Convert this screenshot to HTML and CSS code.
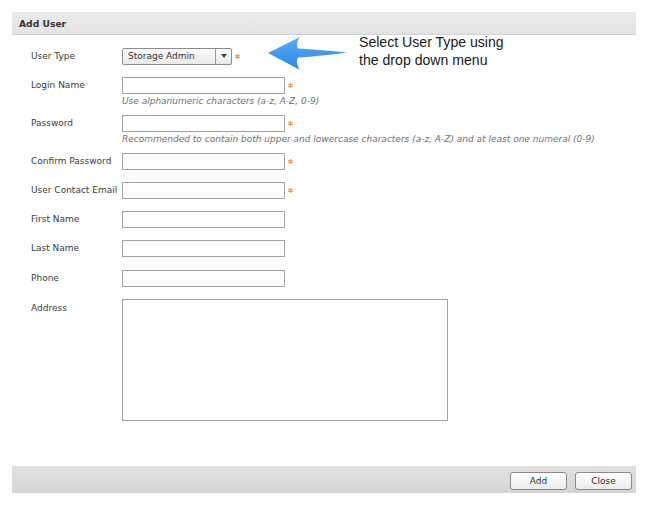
FILE: index.html
```html
<!DOCTYPE html>
<html>
<head>
<meta charset="utf-8">
<link rel="stylesheet" href="styles.css">
</head>
<body>
<div class="dialog">
  <div class="header">Add User</div>
  <div class="body">
    <div class="row">
      <div class="label">User Type</div>
      <div class="field">
        <div class="control-line">
          <div class="select"><span class="select-text">Storage Admin</span><span class="select-btn"><svg width="6" height="4" viewBox="0 0 6 4"><path d="M0 0H6L3 4Z" fill="#444"/></svg></span></div>
          <span class="req"><svg width="7" height="7" viewBox="0 0 7 7"><path d="M3.5 1V6M1.3 2.2L5.7 4.8M1.3 4.8L5.7 2.2" stroke="#f39a4a" stroke-width="1.2"/></svg></span>
        </div>
      </div>
    </div>
    <div class="row has-hint">
      <div class="label">Login Name</div>
      <div class="field">
        <div class="control-line"><div class="input"></div><span class="req"><svg width="7" height="7" viewBox="0 0 7 7"><path d="M3.5 1V6M1.3 2.2L5.7 4.8M1.3 4.8L5.7 2.2" stroke="#f39a4a" stroke-width="1.2"/></svg></span></div>
        <div class="hint">Use alphanumeric characters (a-z, A-Z, 0-9)</div>
      </div>
    </div>
    <div class="row has-hint">
      <div class="label">Password</div>
      <div class="field">
        <div class="control-line"><div class="input"></div><span class="req"><svg width="7" height="7" viewBox="0 0 7 7"><path d="M3.5 1V6M1.3 2.2L5.7 4.8M1.3 4.8L5.7 2.2" stroke="#f39a4a" stroke-width="1.2"/></svg></span></div>
        <div class="hint">Recommended to contain both upper and lowercase characters (a-z, A-Z) and at least one numeral (0-9)</div>
      </div>
    </div>
    <div class="row">
      <div class="label">Confirm Password</div>
      <div class="field">
        <div class="control-line"><div class="input"></div><span class="req"><svg width="7" height="7" viewBox="0 0 7 7"><path d="M3.5 1V6M1.3 2.2L5.7 4.8M1.3 4.8L5.7 2.2" stroke="#f39a4a" stroke-width="1.2"/></svg></span></div>
      </div>
    </div>
    <div class="row">
      <div class="label">User Contact Email</div>
      <div class="field">
        <div class="control-line"><div class="input"></div><span class="req"><svg width="7" height="7" viewBox="0 0 7 7"><path d="M3.5 1V6M1.3 2.2L5.7 4.8M1.3 4.8L5.7 2.2" stroke="#f39a4a" stroke-width="1.2"/></svg></span></div>
      </div>
    </div>
    <div class="row">
      <div class="label">First Name</div>
      <div class="field"><div class="control-line"><div class="input"></div></div></div>
    </div>
    <div class="row row-wide">
      <div class="label">Last Name</div>
      <div class="field"><div class="control-line"><div class="input"></div></div></div>
    </div>
    <div class="row">
      <div class="label">Phone</div>
      <div class="field"><div class="control-line"><div class="input"></div></div></div>
    </div>
    <div class="row row-top">
      <div class="label label-top">Address</div>
      <div class="field"><div class="textarea"></div></div>
    </div>

    <svg class="callout-arrow" width="82" height="36" viewBox="0 0 82 36">
      <defs>
        <linearGradient id="ag" x1="0" y1="0" x2="0" y2="1">
          <stop offset="0" stop-color="#5aacf5"/>
          <stop offset="1" stop-color="#2c86e6"/>
        </linearGradient>
      </defs>
      <path d="M0 16 L32 0 C29 4 28 8 30 11.5 C46 12.5 62 13.5 79 15.5 C62 18 46 19.5 30 20.5 C28 24 29 29 32 33 Z" fill="url(#ag)"/>
    </svg>
    <div class="callout-text">Select User Type using<br>the drop down menu</div>
  </div>
  <div class="footer">
    <button class="btn">Add</button>
    <button class="btn">Close</button>
  </div>
</div>
</body>
</html>
```

FILE: styles.css
```css
html, body {
  margin: 0;
  padding: 0;
  background: #ffffff;
}

body {
  padding: 12px 13px 0 12px;
  font-family: "DejaVu Sans", Verdana, sans-serif;
  font-size: 9px;
  color: #3a3a3a;
}

.dialog {
  width: 624px;
}

.header {
  height: 22px;
  line-height: 23px;
  padding-left: 7px;
  font-weight: bold;
  font-size: 9.2px;
  color: #333;
  background: linear-gradient(#ebebeb, #e3e3e3);
  border-bottom: 1px solid #d2d2d2;
}

.body {
  position: relative;
  height: 418px;
  padding: 13px 0 0 19px;
}

.row {
  display: flex;
  margin-bottom: 13px;
}

.row.has-hint {
  margin-bottom: 7px;
}

.row.row-wide {
  margin-bottom: 14px;
}

.label {
  width: 91px;
  height: 16px;
  line-height: 16px;
  white-space: nowrap;
  color: #3c3c3c;
}

.label-top {
  padding-top: 1px;
}

.field {
  display: flex;
  flex-direction: column;
}

.control-line {
  display: flex;
  align-items: center;
  height: 16px;
}

.input {
  box-sizing: border-box;
  width: 163px;
  height: 17px;
  border: 1px solid #a2a2a2;
  background: #fff;
}

.select {
  box-sizing: border-box;
  width: 110px;
  height: 17px;
  border: 1px solid #8c8c8c;
  border-radius: 2px;
  background: linear-gradient(#fdfdfd, #e9e9e9);
  display: flex;
  align-items: stretch;
}

.select-text {
  flex: 1;
  line-height: 15px;
  padding-left: 5px;
  color: #333;
}

.select-btn {
  width: 15px;
  border-left: 1px solid #9a9a9a;
  display: flex;
  align-items: center;
  justify-content: center;
}

.req {
  display: flex;
  margin-left: 2px;
}

.hint {
  margin-top: 1px;
  line-height: 14px;
  font-style: italic;
  color: #707070;
  white-space: nowrap;
}

.textarea {
  box-sizing: border-box;
  width: 326px;
  height: 122px;
  border: 1px solid #a2a2a2;
  background: #fff;
}

.callout-arrow {
  position: absolute;
  left: 256px;
  top: 2px;
}

.callout-text {
  position: absolute;
  left: 347px;
  top: -2px;
  font-family: "Liberation Sans", Arial, sans-serif;
  font-size: 14.1px;
  line-height: 18px;
  color: #1a1a1a;
}

.footer {
  height: 27px;
  box-sizing: border-box;
  background: linear-gradient(#e2e2e2, #d5d5d5);
  display: flex;
  justify-content: flex-end;
  align-items: center;
  gap: 8px;
  padding: 2px 4px 0 0;
}

.btn {
  box-sizing: border-box;
  width: 57px;
  height: 18px;
  border: 1px solid #8a8a8a;
  border-radius: 3px;
  background: linear-gradient(#ffffff, #ececec);
  font-family: "DejaVu Sans", Verdana, sans-serif;
  font-size: 9px;
  color: #333;
  padding: 0;
}
```
